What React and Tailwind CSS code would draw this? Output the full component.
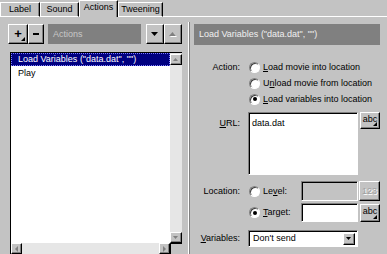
import React from "react";

const raised =
  "bg-[#c3c3c3] border border-t-white border-l-white border-r-black border-b-black shadow-[inset_-1px_-1px_0_#808080]";
const sunken =
  "border border-t-[#808080] border-l-[#808080] border-r-white border-b-white shadow-[inset_1px_1px_0_#000]";

function Tri({ dir = "down", color = "#000", w = 7, h = 4, shadow = false }) {
  const pts = dir === "down" ? `0,0 ${w},0 ${w / 2},${h}` : `0,${h} ${w},${h} ${w / 2},0`;
  return (
    <svg width={w + 1} height={h + 1} viewBox={`0 0 ${w + 1} ${h + 1}`} className="block">
      {shadow && <polygon points={pts} fill="#fff" transform="translate(1,1)" />}
      <polygon points={pts} fill={color} />
    </svg>
  );
}

function Corner() {
  return (
    <svg width="4" height="4" viewBox="0 0 4 4" className="absolute right-[2px] bottom-[2px]">
      <polygon points="4,0 4,4 0,4" fill="#000" />
    </svg>
  );
}

function Radio({ checked }) {
  return (
    <span className="w-[11px] h-[11px] rounded-full bg-white border border-t-[#808080] border-l-[#808080] border-r-white border-b-white shadow-[inset_1px_1px_0_#404040] flex items-center justify-center shrink-0">
      {checked && <span className="w-[4px] h-[4px] rounded-full bg-black" />}
    </span>
  );
}

function U({ children }) {
  return <span className="underline underline-offset-[1px]">{children}</span>;
}

function Tab({ label, selected, w }) {
  if (selected) {
    return (
      <div
        className={`${w} h-[17px] border-t border-l border-white border-r border-r-black shadow-[inset_-1px_0_0_#808080] flex justify-center pt-[2px] bg-[#c3c3c3]`}
      >
        {label}
      </div>
    );
  }
  return (
    <div
      className={`${w} h-[15px] border-t border-l border-white border-r border-r-black border-b border-b-white shadow-[inset_-1px_0_0_#808080] flex justify-center pt-[2px]`}
    >
      {label}
    </div>
  );
}

function SmallBtn({ children, className = "" }) {
  return (
    <div className={`${raised} relative flex items-center justify-center ${className}`}>{children}</div>
  );
}

export default function App() {
  return (
    <div className="w-[387px] h-[254px] bg-[#c3c3c3] overflow-hidden flex flex-col font-['Liberation_Sans',Arial,sans-serif] text-[9px] leading-none text-black">
      {/* Tabs */}
      <div className="flex items-end h-[17px] shrink-0">
        <Tab label="Label" w="w-[40px]" />
        <Tab label="Sound" w="w-[39px]" />
        <Tab label="Actions" w="w-[39px]" selected />
        <Tab label="Tweening" w="w-[45px]" />
        <div className="flex-1 h-px bg-white" />
      </div>

      <div className="flex flex-1 min-h-0">
        {/* Left panel */}
        <div className="w-[183px] flex flex-col pt-[7px]">
          <div className="flex h-[20px] pl-[8px] shrink-0">
            <SmallBtn className="w-[20px] h-[20px]">
              <span className="text-[13px] font-bold leading-none -mt-[1px]">+</span>
              <Corner />
            </SmallBtn>
            <SmallBtn className="w-[16px] h-[20px]">
              <span className="w-[6px] h-[2px] bg-black" />
            </SmallBtn>
            <div className="ml-[4px] w-[93px] h-[20px] bg-[#808080] text-[#c8c8c8] flex items-center pl-[5px]">
              Actions
            </div>
            <SmallBtn className="ml-[5px] w-[18px] h-[20px]">
              <Tri dir="down" />
            </SmallBtn>
            <SmallBtn className="w-[18px] h-[20px]">
              <Tri dir="up" color="#808080" shadow />
            </SmallBtn>
          </div>

          {/* List */}
          <div className="ml-[10px] mt-[8px] w-[172px] flex-1 min-h-0 flex flex-col border-l border-t border-black bg-white">
            <div className="flex flex-1 min-h-0">
              <div className="flex-1">
                <div className="h-[13px] bg-[#000080] text-white flex items-center pl-[7px] outline outline-1 outline-dotted outline-offset-[-1px] outline-[#8080ff]">
                  Load Variables ("data.dat", "")
                </div>
                <div className="h-[14px] flex items-center pl-[7px]">Play</div>
              </div>
              <div className="w-[12px] flex flex-col pt-[1px] bg-[#e6e6e6]">
                <SmallBtn className="w-[12px] h-[11px]">
                  <Tri dir="up" color="#808080" w={5} h={3} />
                </SmallBtn>
                <div className="flex-1" />
                <SmallBtn className="w-[12px] h-[11px]">
                  <Tri dir="down" color="#808080" w={5} h={3} />
                </SmallBtn>
              </div>
            </div>
            <div className="h-[11px] flex shrink-0">
              <SmallBtn className="w-[11px] h-[11px]">
                <span className="w-0 h-0 border-y-[3px] border-y-transparent border-r-[3px] border-r-[#808080]" />
              </SmallBtn>
              <div className="flex-1 bg-[#e6e6e6]" />
              <SmallBtn className="w-[11px] h-[11px]">
                <span className="w-0 h-0 border-y-[3px] border-y-transparent border-l-[3px] border-l-[#808080]" />
              </SmallBtn>
              <div className="w-[12px] bg-[#c3c3c3] border-l border-t border-black" />
            </div>
          </div>
        </div>

        {/* Divider */}
        <div className="w-[11px] flex pt-[5px]">
          <div className="ml-[5px] w-px bg-white" />
          <div className="w-px bg-[#808080]" />
        </div>

        {/* Right panel */}
        <div className="flex-1 flex flex-col pt-[7px]">
          <div className="w-[186px] h-[21px] bg-[#808080] text-[#f0f0f0] flex items-center pl-[5px] shrink-0">
            Load Variables ("data.dat", "")
          </div>

          <div className="mt-[14px] h-[16px] flex items-center">
            <div className="w-[46px] text-right">Action:</div>
            <div className="ml-[9px]"><Radio /></div>
            <div className="ml-[3px]"><U>L</U>oad movie into location</div>
          </div>
          <div className="h-[16px] flex items-center">
            <div className="w-[46px]" />
            <div className="ml-[9px]"><Radio /></div>
            <div className="ml-[3px]">U<U>n</U>load movie from location</div>
          </div>
          <div className="h-[16px] flex items-center">
            <div className="w-[46px]" />
            <div className="ml-[9px]"><Radio checked /></div>
            <div className="ml-[3px]"><U>L</U>oad variables into location</div>
          </div>

          <div className="mt-[5px] flex items-start">
            <div className="w-[46px] text-right pt-[7px]"><U>U</U>RL:</div>
            <div className={`ml-[8px] w-[110px] h-[63px] bg-white ${sunken} pt-[6px] pl-[3px]`}>data.dat</div>
            <SmallBtn className="ml-[2px] w-[20px] h-[17px]">
              <span className="-mt-[2px]">abc</span>
              <Corner />
            </SmallBtn>
          </div>

          <div className="mt-[6px] h-[20px] flex items-center">
            <div className="w-[46px] text-right">Location:</div>
            <div className="ml-[9px]"><Radio /></div>
            <div className="ml-[3px] w-[38px]">Le<U>v</U>el:</div>
            <div className={`w-[57px] h-[20px] ${sunken} bg-[#c3c3c3]`} />
            <SmallBtn className="ml-[1px] w-[21px] h-[20px] text-[#a0a0a0] [text-shadow:1px_1px_0_#fff]">
              123
            </SmallBtn>
          </div>
          <div className="mt-[2px] h-[19px] flex items-center">
            <div className="w-[46px]" />
            <div className="ml-[9px]"><Radio checked /></div>
            <div className="ml-[3px] w-[38px]"><U>T</U>arget:</div>
            <div className={`w-[57px] h-[19px] ${sunken} bg-white`} />
            <SmallBtn className="ml-[2px] w-[20px] h-[18px]">
              <span className="-mt-[2px]">abc</span>
              <Corner />
            </SmallBtn>
          </div>

          <div className="mt-[8px] h-[17px] flex items-center">
            <div className="w-[46px] text-right"><U>V</U>ariables:</div>
            <div className={`ml-[8px] w-[110px] h-[17px] ${sunken} bg-white flex items-center pl-[4px] pr-[2px]`}>
              <span className="flex-1">Don't send</span>
              <SmallBtn className="w-[12px] h-[12px]">
                <Tri dir="down" w={5} h={3} />
              </SmallBtn>
            </div>
          </div>
        </div>
      </div>
    </div>
  );
}
